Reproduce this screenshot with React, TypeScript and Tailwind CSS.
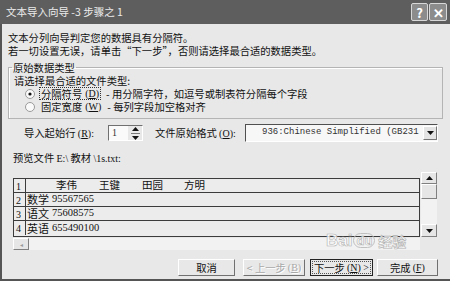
import React from 'react';

const Tri = ({ up }: { up?: boolean }) => (
    <svg width="7" height="4" viewBox="0 0 7 4">
        <path d={up ? 'M0 4L3.5 0L7 4Z' : 'M0 0L3.5 4L7 0Z'} fill="#111" />
    </svg>
);

const Radio = ({ on }: { on?: boolean }) => (
    <svg width="10" height="10" viewBox="0 0 10 10" className="shrink-0">
        <circle cx="5" cy="5" r="4.5" fill="#fafafa" stroke="#9a9a9a" />
        {on && <circle cx="5" cy="5" r="1.6" fill="#111" />}
    </svg>
);

export default function App() {
    return (
        <div className="flex h-[281px] w-[450px] flex-col overflow-hidden whitespace-nowrap bg-[#e8e8e8] font-['Noto_Sans_CJK_SC',sans-serif] text-[10.3px] text-[#111]">
            {/* Title bar */}
            <div className="flex h-[24px] shrink-0 items-center justify-between bg-[#5e5e5e] pl-[6px] pr-[3px]">
                <span className="text-[10.5px] leading-none text-[#ececec]">文本导入向导 -3 步骤之 1</span>
                <div className="flex gap-[1px]">
                    <div className="flex h-[18px] w-[17px] items-center justify-center rounded-[2px] border border-[#d8d8d8] bg-[#8c8c8c] text-[13px] font-bold leading-none text-white">?</div>
                    <div className="flex h-[18px] w-[18px] items-center justify-center rounded-[2px] border border-[#d8d8d8] bg-[#8c8c8c] text-[13px] font-bold leading-none text-white">✕</div>
                </div>
            </div>

            {/* Body */}
            <div className="flex flex-1 flex-col border-b-2 border-l-2 border-[#555] pl-[6px] pr-[7px] pt-[7px]">
                <div className="leading-[13px]">文本分列向导判定您的数据具有分隔符。</div>
                <div className="leading-[13px]">若一切设置无误，请单击“下一步”，否则请选择最合适的数据类型。</div>

                {/* Group box */}
                <fieldset className="mt-[4px] border border-[#b4b4b4] pb-[5px] pl-[5px] shadow-[inset_1px_1px_0_#fff]">
                    <legend className="ml-[-2px] px-[1px] leading-[13px]">原始数据类型</legend>
                    <div className="leading-[13px]">请选择最合适的文件类型:</div>
                    <div className="flex h-[13px] items-center pl-[11px] leading-[11px]">
                        <Radio on />
                        <span className="ml-[4px] flex items-center border border-dotted border-[#333] px-[1px]">
                            分隔符号<span className="ml-[3px] font-['Liberation_Serif',serif] text-[10px]">(<u>D</u>)</span>
                        </span>
                        <span className="ml-[5px]">- 用分隔字符，如逗号或制表符分隔每个字段</span>
                    </div>
                    <div className="flex h-[13px] items-center pl-[11px] leading-[11px]">
                        <Radio />
                        <span className="ml-[5px] flex items-center px-[1px]">
                            固定宽度<span className="ml-[3px] font-['Liberation_Serif',serif] text-[10px]">(<u>W</u>)</span>
                        </span>
                        <span className="ml-[5px]">- 每列字段加空格对齐</span>
                    </div>
                </fieldset>

                {/* Start row / file origin */}
                <div className="mt-[5px] flex h-[18px] items-center pl-[16px]">
                    <span className="w-[84px]">
                        导入起始行 <span className="font-['Liberation_Serif',serif] text-[10px]">(<u>R</u>):</span>
                    </span>
                    <div className="flex h-[16px] w-[35px] border border-b-white border-l-[#707070] border-r-white border-t-[#707070] bg-[#fafafa]">
                        <span className="flex-1 pl-[3px] font-['Liberation_Serif',serif] text-[10px] leading-[14px] text-[#333]">1</span>
                        <div className="flex w-[14px] flex-col items-center justify-center gap-[2px] bg-[#e8e8e8]">
                            <Tri up />
                            <div className="h-[1px] w-[9px] bg-[#777]" />
                            <Tri />
                        </div>
                    </div>
                    <span className="ml-[12px] w-[90px]">
                        文件原始格式 <span className="font-['Liberation_Serif',serif] text-[10px]">(<u>O</u>):</span>
                    </span>
                    <div className="flex h-[18px] w-[193px] items-center border border-b-white border-l-[#505050] border-r-white border-t-[#505050] bg-[#f7f7f7]">
                        <span className="flex-1 pl-[16px] font-['Liberation_Mono',monospace] text-[9px] text-[#333]">936:Chinese Simplified (GB231</span>
                        <div className="flex h-[14px] w-[14px] items-center justify-center border border-b-[#777] border-l-white border-r-[#777] border-t-white bg-[#e4e4e4]">
                            <Tri />
                        </div>
                    </div>
                </div>

                <div className="mt-[9px] pl-[5px] leading-[13px]">
                    预览文件 <span className="font-['Liberation_Serif',serif] text-[10px]">E:\</span> 教材 <span className="font-['Liberation_Serif',serif] text-[10px]">\1s.txt:</span>
                </div>

                {/* Preview */}
                <div className="relative ml-[5px] mt-[7px] flex">
                    <div className="flex w-[407px] flex-col pt-[6px]">
                        <div className="flex h-[59px] flex-col border border-[#3c3c3c] bg-[#ececec]">
                            <div className="flex h-[14px] items-end border-b border-[#3c3c3c]">
                                <span className="h-full w-[12px] border-r border-[#3c3c3c] pl-[2px] font-['Liberation_Serif',serif] text-[10px] leading-[16px]">1</span>
                                <div className="ml-[30px] flex text-[10.5px] leading-[14px]">
                                    <span className="w-[43px]">李伟</span>
                                    <span className="w-[43px]">王键</span>
                                    <span className="w-[42px]">田园</span>
                                    <span>方明</span>
                                </div>
                            </div>
                            {[
                                ['2', '数学', '95567565'],
                                ['3', '语文', '75608575'],
                                ['4', '英语', '655490100'],
                            ].map(([n, s, v], i) => (
                                <div key={n} className={`flex h-[14px] items-end ${i < 2 ? 'border-b border-[#3c3c3c]' : ''}`}>
                                    <span className="h-full w-[12px] border-r border-[#3c3c3c] pl-[2px] font-['Liberation_Serif',serif] text-[10px] leading-[16px]">{n}</span>
                                    <span className="pl-[1px] text-[11px] leading-[14px]">{s}</span>
                                    <span className="ml-[3px] font-['Liberation_Serif',serif] text-[10.5px] leading-[14px]">{v}</span>
                                </div>
                            ))}
                        </div>
                        <div className="mt-[1px] flex h-[12px] bg-[#f2f2f2]">
                            <div className="flex w-[16px] items-center justify-center border border-b-[#808080] border-l-white border-r-[#808080] border-t-white bg-[#e6e6e6] text-[6px] text-[#999]">◂</div>
                        </div>
                    </div>
                    <div className="ml-[1px] flex h-[65px] w-[16px] flex-col bg-[#f2f2f2]">
                        <div className="flex h-[12px] items-center justify-center border border-b-[#808080] border-l-white border-r-[#808080] border-t-white bg-[#e6e6e6]">
                            <Tri up />
                        </div>
                        <div className="h-[15px] border border-b-[#808080] border-l-white border-r-[#808080] border-t-white bg-[#e6e6e6]" />
                        <div className="flex-1" />
                        <div className="flex h-[13px] items-center justify-center border border-b-[#808080] border-l-white border-r-[#808080] border-t-white bg-[#e6e6e6]">
                            <Tri />
                        </div>
                    </div>

                    {/* Watermark */}
                    <div className="pointer-events-none absolute left-[313px] top-[60px] flex items-center gap-[1px] font-['Liberation_Sans',sans-serif] text-[17px] font-bold leading-none text-white/80 [-webkit-text-stroke:0.6px_#b0b0b0]">
                        <span>Bai</span>
                        <span className="rounded-full border border-[#c0c0c0] px-[2px] text-[13px]">du</span>
                        <span className="ml-[2px] font-['Noto_Sans_CJK_SC',sans-serif] text-[14px]">经验</span>
                    </div>
                </div>

                {/* Buttons */}
                <div className="mt-[9px] flex justify-end gap-[5px] pr-[5px]">
                    <div className="mr-[3px] flex h-[17px] w-[57px] items-center justify-center border border-b-[#707070] border-l-white border-r-[#707070] border-t-white">取消</div>
                    <div className="flex h-[17px] w-[62px] items-center justify-center border border-b-[#707070] border-l-white border-r-[#707070] border-t-white text-[#a8a8a8] [text-shadow:1px_1px_0_#fff]">
                        &lt; 上一步 <span className="ml-[2px] font-['Liberation_Serif',serif] text-[10px]">(<u>B</u>)</span>
                    </div>
                    <div className="flex h-[17px] w-[63px] items-center justify-center border border-[#222] p-[1px]">
                        <div className="flex h-full w-full items-center justify-center border border-dotted border-[#555]">
                            下一步 <span className="ml-[2px] font-['Liberation_Serif',serif] text-[10px]">(<u>N</u>) &gt;</span>
                        </div>
                    </div>
                    <div className="ml-[-1px] flex h-[17px] w-[61px] items-center justify-center border border-b-[#707070] border-l-white border-r-[#707070] border-t-white">
                        完成 <span className="ml-[2px] font-['Liberation_Serif',serif] text-[10px]">(<u>F</u>)</span>
                    </div>
                </div>
            </div>
        </div>
    );
}
